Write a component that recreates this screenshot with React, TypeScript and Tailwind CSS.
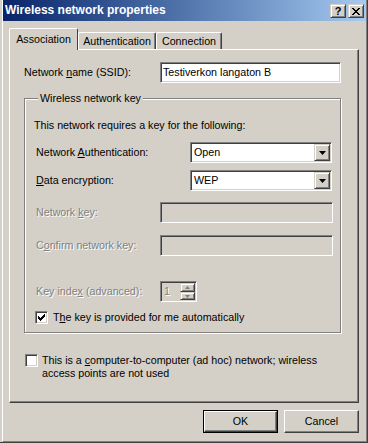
function U({ children }: { children: string }) {
  return <span className="underline underline-offset-[1px] decoration-[1px]">{children}</span>;
}

const sunken =
  "border border-t-[#808080] border-l-[#808080] border-r-white border-b-white shadow-[inset_1px_1px_0_#404040,inset_-1px_-1px_0_#d4d0c8]";
const raised =
  "border border-t-[#d4d0c8] border-l-[#d4d0c8] border-r-[#404040] border-b-[#404040] shadow-[inset_1px_1px_0_white,inset_-1px_-1px_0_#808080]";
const raisedBtn =
  "border border-t-white border-l-white border-r-[#404040] border-b-[#404040] shadow-[inset_-1px_-1px_0_#808080]";
const disabledText = "text-[#808080] [text-shadow:1px_1px_0_white]";

function Combo({ value }: { value: string }) {
  return (
    <div className={`${sunken} bg-white w-[142px] h-[21px] flex items-center justify-between pl-[3px] pr-[1px]`}>
      <span>{value}</span>
      <div className={`${raised} bg-[#d4d0c8] w-[16px] h-[17px] flex items-center justify-center`}>
        <svg width="7" height="4" viewBox="0 0 7 4">
          <polygon points="0,0 7,0 3.5,4" fill="black" />
        </svg>
      </div>
    </div>
  );
}

function Check({ checked }: { checked: boolean }) {
  return (
    <div className={`${sunken} bg-white w-[13px] h-[13px] flex items-center justify-center shrink-0`}>
      {checked && (
        <svg width="7" height="7" viewBox="0 0 7 7" shapeRendering="crispEdges">
          <path d="M6 0h1v3h-1zM5 1h1v3h-1zM4 2h1v3h-1zM3 3h1v3h-1zM2 4h1v3h-1zM1 3h1v3h-1zM0 2h1v3h-1z" fill="black" />
        </svg>
      )}
    </div>
  );
}

export default function App() {
  return (
    <div className="w-[368px] h-[443px] bg-[#d4d0c8] font-['Liberation_Sans',Arial,sans-serif] text-[10.7px] leading-[13px] text-black overflow-hidden">
      <div className="w-full h-full border-r border-b border-[#404040] pl-[2px]">
        <div className="h-full border-l border-l-white border-r border-b border-r-[#808080] border-b-[#808080] flex flex-col">
          {/* title bar */}
          <div className="h-[21px] bg-gradient-to-r from-[#0a246a] to-[#a6caf0] flex items-center justify-between pl-[2px] pr-[2px]">
            <span className="text-white font-bold text-[12px]">Wireless network properties</span>
            <div className="flex gap-[2px] mt-[1px]">
              <div className={`${raised} bg-[#d4d0c8] w-[16px] h-[14px] flex items-center justify-center font-bold text-[11px] leading-none`}>?</div>
              <div className={`${raised} bg-[#d4d0c8] w-[16px] h-[14px] flex items-center justify-center`}>
                <svg width="8" height="7" viewBox="0 0 8 7" shapeRendering="crispEdges">
                  <path d="M0 0h2v1h-2zM6 0h2v1h-2zM1 1h2v1h-2zM5 1h2v1h-2zM2 2h4v1h-4zM3 3h2v1h-2zM2 4h4v1h-4zM1 5h2v1h-2zM5 5h2v1h-2zM0 6h2v1h-2zM6 6h2v1h-2z" fill="black" />
                </svg>
              </div>
            </div>
          </div>

          {/* tabs */}
          <div className="mt-[7px] ml-[6px] flex items-end">
            <div className="relative z-10 -mb-px h-[22px] w-[69px] bg-[#d4d0c8] border-t border-l border-t-white border-l-white border-r border-r-[#404040] rounded-t-[2px] flex items-start justify-center pt-[4px]">
              Association
            </div>
            <div className="h-[17px] w-[78px] border-t border-l border-t-white border-l-white border-r border-r-[#404040] shadow-[inset_-1px_0_0_#808080] rounded-t-[2px] flex items-start justify-center pt-[2px]">
              Authentication
            </div>
            <div className="h-[17px] w-[66px] border-t border-l border-t-white border-l-white border-r border-r-[#404040] shadow-[inset_-1px_0_0_#808080] rounded-t-[2px] flex items-start justify-center pt-[2px]">
              Connection
            </div>
          </div>

          {/* panel */}
          <div className="ml-[6px] w-[350px] h-[354px] border border-t-white border-l-white border-r-[#404040] border-b-[#404040] shadow-[inset_-1px_-1px_0_#808080] flex flex-col">
            <div className="mt-[12px] ml-[14px] flex items-center">
              <span className="w-[136px]">
                Network <U>n</U>ame (SSID):
              </span>
              <div className={`${sunken} bg-white w-[181px] h-[21px] flex items-center pl-[2px]`}>Testiverkon langaton B</div>
            </div>

            <fieldset className="mt-[9px] ml-[14px] w-[317px] border border-[#808080] shadow-[1px_1px_0_white,inset_1px_1px_0_white] pl-[9px] pb-[8px]">
              <legend className="ml-[4px] px-[2px] bg-[#d4d0c8] leading-[13px]">Wireless network key</legend>
              <div className="mt-[14px]">This network requires a key for the following:</div>

              <div className="mt-[10px] ml-[2px] flex items-center">
                <span className="w-[154px]">
                  Network <U>A</U>uthentication:
                </span>
                <Combo value="Open" />
              </div>
              <div className="mt-[7px] ml-[2px] flex items-center">
                <span className="w-[154px]">
                  <U>D</U>ata encryption:
                </span>
                <Combo value="WEP" />
              </div>

              <div className="mt-[11px] ml-[2px] flex items-center">
                <span className={`w-[124px] ${disabledText}`}>
                  Network <U>k</U>ey:
                </span>
                <div className={`${sunken} bg-[#d4d0c8] w-[173px] h-[21px]`} />
              </div>
              <div className="mt-[12px] ml-[2px] flex items-center">
                <span className={`w-[124px] ${disabledText}`}>
                  C<U>o</U>nfirm network key:
                </span>
                <div className={`${sunken} bg-[#d4d0c8] w-[173px] h-[21px]`} />
              </div>

              <div className="mt-[25px] ml-[2px] flex items-center">
                <span className={`w-[124px] ${disabledText}`}>
                  Key inde<U>x</U> (advanced):
                </span>
                <div className={`${sunken} bg-[#d4d0c8] w-[37px] h-[21px] flex items-center justify-between pl-[3px] pr-[1px]`}>
                  <span className={disabledText}>1</span>
                  <div className="flex flex-col w-[15px] h-[17px]">
                    <div className={`${raised} bg-[#d4d0c8] h-[9px] flex items-center justify-center`}>
                      <svg width="5" height="3" viewBox="0 0 5 3">
                        <polygon points="0,3 5,3 2.5,0" fill="#808080" />
                      </svg>
                    </div>
                    <div className={`${raised} bg-[#d4d0c8] h-[8px] flex items-center justify-center`}>
                      <svg width="5" height="3" viewBox="0 0 5 3">
                        <polygon points="0,0 5,0 2.5,3" fill="#808080" />
                      </svg>
                    </div>
                  </div>
                </div>
              </div>

              <div className="mt-[9px] ml-[1px] flex items-center gap-[5px]">
                <Check checked />
                <span>
                  T<U>h</U>e key is provided for me automatically
                </span>
              </div>
            </fieldset>

            <div className="mt-[21px] ml-[15px] flex items-start gap-[4px]">
              <Check checked={false} />
              <span className="w-[290px]">
                This is a <U>c</U>omputer-to-computer (ad hoc) network; wireless access points are not used
              </span>
            </div>
          </div>

          {/* buttons */}
          <div className="mt-[7px] pr-[7px] flex justify-end gap-[6px]">
            <div className="w-[75px] h-[23px] border border-black">
              <div className={`${raisedBtn} w-full h-full flex items-center justify-center`}>OK</div>
            </div>
            <div className={`${raisedBtn} w-[75px] h-[23px] flex items-center justify-center`}>Cancel</div>
          </div>
        </div>
      </div>
    </div>
  );
}
